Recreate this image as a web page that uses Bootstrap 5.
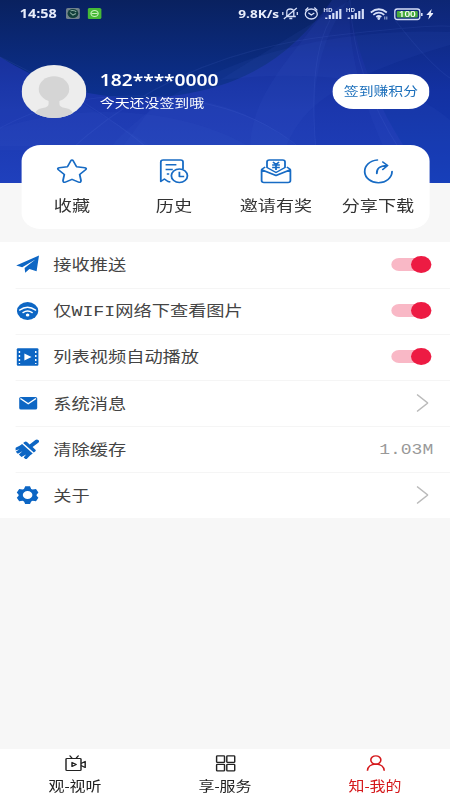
<!DOCTYPE html>
<html lang="zh-CN">
<head>
<meta charset="utf-8">
<meta name="viewport" content="width=device-width, initial-scale=1">
<title>我的</title>
<link href="https://cdn.jsdelivr.net/npm/bootstrap@5.3.0/dist/css/bootstrap.min.css" rel="stylesheet">
<style>
html,body{height:100%;overflow:hidden}
body{background:#f7f7f7;font-family:"Noto Sans","Noto Sans CJK SC",sans-serif;color:#444}
/* 375-unit wide layout, widened to the 450px window */
.app{width:375px;height:800px;transform:scaleX(1.2);transform-origin:0 0;overflow:hidden}
svg{display:block;flex:none}
.hero{height:183px}
.hero-bg{z-index:0;top:0;left:0;width:375px;height:183px}
.status{height:27px;padding:0 14px 0 16.5px;color:#e8edfb;font:700 12px/27px "Open Sans",sans-serif}
.speed{font-size:11.3px}
.profile{height:53px;margin-top:38px;padding:0 17.3px 0 17.5px}
.avatar{width:54px;height:53px}
.phone{font-size:16px;line-height:20px;font-weight:600}
.sub{font-size:12.45px;line-height:18px;margin-top:5px}
.sign{width:80.5px;height:34.5px;font-size:12.4px;color:#1b6fbb;line-height:1;padding:2px 0 0}
.quick{width:340px;height:84px;margin:27.3px auto 0 17.5px;border-radius:16px;z-index:1;color:#333;font-size:15.1px}
.quick svg{margin:12px auto 0;width:28px;height:28px}
.quick span{line-height:22px;margin-top:9px}
.settings{margin-top:58.5px;font-family:"Liberation Mono","Noto Sans CJK SC",monospace;font-size:15.2px}
.line{height:46.17px;padding-right:15px;margin-left:13.3px}
.line+.line{border-top:1px solid #f5f5f5}
.line>span{padding-top:3px}
.line>svg{margin-bottom:1px}
.line>svg:first-child{width:20px;height:20px;margin-right:11.1px}
.toggle{width:33.5px;height:17px;margin-right:.5px}
.arrow{margin-right:3.200px}
.size{color:#999;font-size:15px;margin-right:-1px}
.line>.size{padding-top:4px}
.tabs{height:51.5px;font-size:13.3px;color:#222}
.tabs svg{margin:4px auto 0;width:20px;height:20px}
.tabs span{line-height:18px;margin-top:4px}
.now{color:#d5191c}
</style>
<script src="https://cdn.jsdelivr.net/npm/bootstrap@5.3.0/dist/js/bootstrap.bundle.min.js"></script>
</head>
<body>
<div class="app d-flex flex-column">
<header class="hero position-relative flex-shrink-0">
  <svg class="hero-bg position-absolute" viewBox="0 0 450 183" preserveAspectRatio="none">
    <defs>
      <linearGradient id="dk" x1="0" y1="0" x2="0" y2="1"><stop offset="0" stop-color="#09215f"/><stop offset=".55" stop-color="#0c3192"/></linearGradient>
      <linearGradient id="bl" x1="0" y1="0" x2="0" y2="1"><stop offset="0" stop-color="#0d2370"/><stop offset=".3" stop-color="#142d98"/><stop offset=".6" stop-color="#1b37ad"/><stop offset="1" stop-color="#1f40bd"/></linearGradient>
      <linearGradient id="rt" x1="0" y1="0" x2="0" y2="1"><stop offset="0" stop-color="#0d2674"/><stop offset=".5" stop-color="#1331a2"/><stop offset="1" stop-color="#133cb8"/></linearGradient>
    </defs>
    <path fill="url(#dk)" d="M0 0h450v183H0z"/>
    <path fill="url(#bl)" d="M0 57C40 82 90 100 150 98C240 92 290 58 332 0H450V183H0z"/>
    <path fill="url(#rt)" d="M348 0C358 62 385 130 432 183H450V0z"/>
    <g fill="#4064d8" fill-opacity=".09">
      <path d="M0 57C60 92 115 120 150 146H0z"/><path d="M0 128C90 100 190 110 255 150H0z"/>
      <path d="M108 150C180 65 320 26 450 32V45C330 80 300 110 285 150z"/>
      <path d="M160 96C225 98 275 125 300 150H120z"/><path d="M332 0C300 50 250 90 250 150H316C312 90 315 50 348 0z"/>
      <path d="M220 80C300 70 400 75 450 120V183H400C380 140 345 70 350 0z"/>
    </g>
    <g fill="none" stroke="#6a8be8" stroke-opacity=".1"><path d="M0 128Q70 90 160 97T302 150M65 155Q170 55 330 36T450 34M316 150Q308 60 330 20M350 0Q354 80 400 150M395 20Q430 65 450 78M0 57Q90 100 150 150"/></g>
  </svg>
  <div class="status d-flex align-items-center position-relative">
    <span>14:58</span>
    <svg class="ms-2" width="13" height="11" viewBox="0 0 13 11"><rect width="11.500" height="11" rx="1.500" fill="#70818b"/><circle cx="5.800" cy="5.500" r="4.500" fill="#123f3b"/><path d="M3.300 4.500 5.800 7 8.300 5.500M3.800 2.800Q7.300 2 8.500 4" fill="none" stroke="#85a89d"/></svg>
    <svg width="12" height="11" viewBox="0 0 12 11" style="margin-left:5px"><rect width="11.500" height="11" rx="1.500" fill="#46b936"/><circle cx="5.800" cy="5.500" r="3" fill="none" stroke="#c6efb9"/><path d="M3.300 5.500h5" stroke="#c6efb9"/></svg>
    <span class="ms-auto speed">9.8K/s</span>
    <svg width="153" height="17" viewBox="0 0 153 17" preserveAspectRatio="none" style="width:127.5px;margin-left:1px" fill="none" stroke="#d6dff8" stroke-width="1.3">
      <path d="M5 11.500H15M6 11V7Q6 4 9.500 4Q13 4 13 7V11M8.500 13.500h3M3 14 16 3M2 7V10M16.500 7V10"/>
      <ellipse cx="30.500" cy="9" rx="6" ry="5"/><path d="m27.500 7.800 3 2.200L33.500 8M24.500 5.500l3-3M33.500 2.500l3 3"/>
      <g stroke-width="2.200"><path d="M45.500 14v-1.500M49 14v-4M52.500 14V8M56 14V6M59.500 14V4M68 14v-1.500M71.500 14v-4M75 14V8M78.500 14V6M82 14V4"/></g>
      <g fill="#d6dff8" stroke="none" font-family="Open Sans" font-size="6" font-weight="700"><text x="42.500" y="7" textLength="9.500" lengthAdjust="spacingAndGlyphs">HD</text><text x="65" y="7" textLength="9.500" lengthAdjust="spacingAndGlyphs">HD</text></g>
      <path stroke-width="1.700" d="M90 7.500Q98 1 106 7.500M92.500 9.800Q98 5.500 103.500 9.800M95.500 12Q98 10 100.500 12"/><circle cx="98" cy="13.500" r=".8"/><path stroke-width=".8" d="M104 11.500v3M106 11.500v3"/>
      <rect x="114" y="4" width="25" height="10.500" rx="2.500"/><rect x="116" y="6" width="21" height="6.500" rx="1" fill="#48ac3d" stroke="none"/><path stroke-width="1.600" d="M141 8v3"/>
      <text x="118" y="12.200" fill="#fff" stroke="none" font-family="Open Sans" font-size="8" font-weight="600" textLength="17" lengthAdjust="spacingAndGlyphs">100</text>
      <path fill="#e8edfb" stroke="none" d="M151 4 145.500 10h3l-1 4.500 5.500-6.500h-3z"/>
    </svg>
  </div>
  <div class="profile d-flex align-items-center position-relative text-white">
    <svg class="avatar rounded-circle" viewBox="0 0 54 53"><path fill="#ededed" d="M0 0h54v53H0z"/><g fill="#d5d5d5"><circle cx="27" cy="24" r="12.700"/><path d="M22.500 34h9v5q0 3 5 4 7 1 7 10h-33q0-9 7-10 5-1 5-4z"/></g></svg>
    <div style="margin-left:11.600px"><div class="phone">182****0000</div><div class="sub">今天还没签到哦</div></div>
    <button class="btn bg-white rounded-pill sign ms-auto">签到赚积分</button>
  </div>
  <nav class="quick bg-white position-relative d-flex text-center">
    <div class="col-3 d-flex flex-column"><svg viewBox="0 0 28 28" fill="none" stroke="#176bc4" stroke-width="1.500" stroke-linejoin="round"><path d="M12.800 4.200Q14 2 15.200 4.200L17.800 9.700 24.700 10.700Q26.700 11.200 25.300 12.700L20.400 17.500 21.500 23.500Q21.500 26 19.500 25.100L14 22.300 8.500 25.100Q6.500 26 6.500 23.500L7.600 17.500 2.700 12.700Q1.300 11.200 3.300 10.700L10.200 9.700z"/></svg><span>收藏</span></div>
    <div class="col-3 d-flex flex-column"><svg viewBox="0 0 28 28" fill="none" stroke="#176bc4" stroke-width="1.500" stroke-linejoin="round"><path d="M21.500 12V5q0-2-2-2H5q-2 0-2 2V24.500l3-2.500 3 2.500 2 .5M7 7.800h9M7 12.500h6M8 17h2"/><circle cx="18.500" cy="18.700" r="6.700"/><path d="M18.500 14.700v4.800h4"/></svg><span>历史</span></div>
    <div class="col-3 d-flex flex-column"><svg viewBox="0 0 28 28" fill="none" stroke="#176bc4" stroke-width="1.500" stroke-linejoin="round"><path d="M6.500 10.500V5q0-2 2-2h11q2 0 2 2v5.500L14 15.500zM5 10 2.500 12Q2 12.500 2 13.500V23.500q0 2 2 2h20q2 0 2-2V13.500q0-1-.5-1.500L23 10M2.500 13 14 18.500l11.500-5.500M11.500 5l2.500 2.500L16.500 5M14 7.500v5.500M10.800 8h6.400M10.800 10.500h6.400"/></svg><span>邀请有奖</span></div>
    <div class="col-3 d-flex flex-column"><svg viewBox="0 0 28 28" fill="none" stroke="#176bc4" stroke-width="1.500" stroke-linecap="round" stroke-linejoin="round"><path d="M13.500 3A11.400 11.400 0 1 0 25.700 14.500M13 16.500Q12.500 9 21.500 8.500M18 5l4 3.500-4 4"/></svg><span>分享下载</span></div>
  </nav>
</header>
<main class="settings bg-white flex-shrink-0">
  <div class="line d-flex align-items-center"><svg viewBox="0 0 20 20" fill="#0d66c4"><path d="M.5 11.500 19.500 1.500 17.500 17.300 11.500 15 8 18.800 7.500 14 16.500 5.500 5.500 13.300z"/></svg><span>接收推送</span><svg class="toggle ms-auto" viewBox="0 0 33.500 17"><rect y="2" width="31" height="13" rx="6.500" fill="#f9b8c6"/><circle cx="25" cy="8.500" r="8.500" fill="#ed1b43"/></svg></div>
  <div class="line d-flex align-items-center"><svg viewBox="0 0 20 20"><circle cx="10" cy="10" r="8.900" fill="#0d66c4"/><g fill="none" stroke="#fff" stroke-width="1.500" stroke-linecap="round"><path d="M3.500 9Q10 3.500 16.500 9M6.300 11.500Q10 8.500 13.700 11.500"/></g><circle cx="10" cy="14" r="1.500" fill="#fff"/></svg><span>仅WIFI网络下查看图片</span><svg class="toggle ms-auto" viewBox="0 0 33.500 17"><rect y="2" width="31" height="13" rx="6.500" fill="#f9b8c6"/><circle cx="25" cy="8.500" r="8.500" fill="#ed1b43"/></svg></div>
  <div class="line d-flex align-items-center"><svg viewBox="0 0 20 20"><rect x="1" y="1.200" width="18" height="17.600" rx="1" fill="#0d66c4"/><path fill="#fff" d="m7.300 6.500 6 3.500-6 3.500z"/><path stroke="#fff" stroke-width="1.200" stroke-dasharray="2 2" d="M3.200 4v13M16.800 4v13"/></svg><span>列表视频自动播放</span><svg class="toggle ms-auto" viewBox="0 0 33.500 17"><rect y="2" width="31" height="13" rx="6.500" fill="#f9b8c6"/><circle cx="25" cy="8.500" r="8.500" fill="#ed1b43"/></svg></div>
  <div class="line d-flex align-items-center"><svg viewBox="0 0 20 20"><rect x="3" y="4" width="15" height="12.500" rx="1.500" fill="#0d66c4"/><path d="m4 5.500 6.500 5.200L17 5.500" fill="none" stroke="#fff" stroke-width="1.200"/></svg><span>系统消息</span><svg class="ms-auto arrow" width="10" height="18" viewBox="0 0 10 18"><path d="m.5.500 9 8.500-9 8.500" fill="none" stroke="#bbb" stroke-width="1.300"/></svg></div>
  <div class="line d-flex align-items-center"><svg viewBox="0 0 20 20"><g transform="translate(10 9.500) rotate(47)" fill="#0d66c4"><path d="M-1.800-4V-10.500Q-1.800-12.300 0-12.300T1.800-10.500V-4H5Q6.500-4 6.500-2.500V-1H-6.500V-2.500Q-6.500-4-5-4zM-6.500.2h13V3L7.300 8.500H4.300L3.500 5 2.700 9.500H-.5L-1 5-1.800 9.500H-4.300L-4 5.500-5.500 9H-8L-6.500 3z"/></g></svg><span>清除缓存</span><span class="size ms-auto">1.03M</span></div>
  <div class="line d-flex align-items-center"><svg viewBox="0 0 20 20"><path fill="#0d66c4" fill-rule="evenodd" d="m8 1.200h4l1 2.700 1.200.7 2.800-.5 2 3.500-1.500 2.100v1l1.500 2-2 3.500-2.800-.4-1.200.7-1 2.500H8l-1-2.500-1.200-.7-2.800.4-2-3.500 1.500-2v-1L1 7.600l2-3.500 2.800.5L7 3.900zM10 6a4 4 0 1 0 0 8 4 4 0 0 0 0-8z"/></svg><span>关于</span><svg class="ms-auto arrow" width="10" height="18" viewBox="0 0 10 18"><path d="m.5.500 9 8.500-9 8.500" fill="none" stroke="#bbb" stroke-width="1.300"/></svg></div>
</main>
<footer class="tabs bg-white mt-auto flex-shrink-0 d-flex text-center">
  <div class="col-4 d-flex flex-column"><svg viewBox="0 0 20 20" fill="none" stroke="currentColor" stroke-width="1.200" stroke-linejoin="round"><rect x="2" y="5.500" width="12.500" height="12" rx=".8"/><path d="m5 2.500 2 2.700M12.500 2.500l-2 2.700M7 9.500v4l3.500-2zM14.500 10.500l3.500-2v6l-3.500-2"/></svg><span>观-视听</span></div>
  <div class="col-4 d-flex flex-column"><svg viewBox="0 0 20 20" fill="none" stroke="currentColor" stroke-width="1.200"><rect x="2.500" y="2.800" width="6.600" height="6.600" rx=".7"/><rect x="11" y="2.800" width="6.600" height="6.600" rx=".7"/><rect x="2.500" y="11.300" width="6.600" height="6.600" rx=".7"/><rect x="11" y="11.300" width="6.600" height="6.600" rx=".7"/></svg><span>享-服务</span></div>
  <div class="col-4 d-flex flex-column now"><svg viewBox="0 0 20 20" fill="none" stroke="currentColor" stroke-width="1.300"><circle cx="10.200" cy="7" r="4.200"/><path d="M3.200 17.800Q3.600 11.400 10.200 11.200 16.800 11.400 17.200 17.800"/></svg><span>知-我的</span></div>
</footer>
</div>
</body>
</html>
